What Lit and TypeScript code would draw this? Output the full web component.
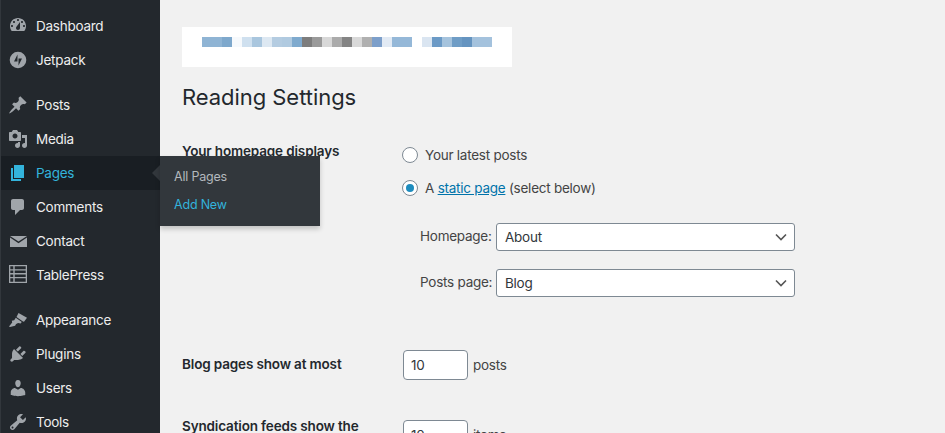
import { LitElement, html, css, svg } from "lit";
import { customElement } from "lit/decorators.js";

const ICONS: Record<string, unknown> = {
  dashboard: svg`<path fill-rule="evenodd" transform="translate(0 -1)" d="M3.760 16h12.480c1.100-1.370 1.760-3.110 1.760-5 0-4.420-3.580-8-8-8s-8 3.580-8 8c0 1.890.66 3.630 1.760 5zM10 4c.55 0 1 .45 1 1s-.45 1-1 1-1-.45-1-1 .45-1 1-1zM6 6c.55 0 1 .45 1 1s-.45 1-1 1-1-.45-1-1 .45-1 1-1zm8 0c.55 0 1 .45 1 1s-.45 1-1 1-1-.45-1-1 .45-1 1-1zm-5.370 5.550L12 7v6c0 1.100-.9 2-2 2s-2-.9-2-2c0-.57.24-1.080.63-1.450zM4 10c.55 0 1 .45 1 1s-.45 1-1 1-1-.45-1-1 .45-1 1-1zm12 0c.55 0 1 .45 1 1s-.45 1-1 1-1-.45-1-1 .45-1 1-1z"/>`,
  jetpack: svg`<path fill-rule="evenodd" d="M10 1.700a8.300 8.300 0 1 0 0 16.600 8.300 8.300 0 0 0 0-16.600zM9.500 4.500v7H6zM10.500 15.500v-7H14z"/>`,
  posts: svg`<path d="M10.440 3.020l1.820-1.820 6.360 6.350-1.830 1.820c-1.050-.68-2.480-.57-3.410.36l-.75.75c-.92.93-1.040 2.350-.35 3.410l-1.830 1.820-2.410-2.410-2.800 2.790c-.42.420-3.380 2.710-3.800 2.290s1.860-3.390 2.280-3.810l2.790-2.790L4.100 9.360l1.830-1.820c1.050.69 2.480.57 3.400-.36l.75-.75c.93-.92 1.050-2.350.36-3.410z"/>`,
  media: svg`<path d="M13 11V4c0-.55-.45-1-1-1h-1.670L9 1H5L3.670 3H2c-.55 0-1 .45-1 1v7c0 .55.45 1 1 1h10c.55 0 1-.45 1-1zM7 4.500c1.380 0 2.500 1.120 2.500 2.500S8.380 9.500 7 9.500 4.500 8.380 4.500 7 5.620 4.500 7 4.500zM14 6h5v10.500c0 1.380-1.120 2.500-2.500 2.500S14 17.880 14 16.500s1.120-2.500 2.500-2.500c.17 0 .34.020.5.050V9h-3V6zm-4 8.050V13h2v3.500c0 1.380-1.120 2.500-2.500 2.500S7 17.880 7 16.500 8.120 14 9.500 14c.17 0 .34.020.5.050z"/>`,
  pages: svg`<path d="M6 15V2h10v13H6zm-1 1h8v2H3V5h2v11z"/>`,
  comments: svg`<path d="M5 2h9c1.100 0 2 .9 2 2v7c0 1.100-.9 2-2 2h-2l-5 5v-5H5c-1.100 0-2-.9-2-2V4c0-1.100.9-2 2-2z"/>`,
  contact: svg`<path d="M2 5h17l-8.500 5.600z"/><path d="M2 6.600l8.500 5.600L19 6.600V16H2z"/>`,
  table: svg`<path fill-rule="evenodd" d="M1 0h18v18H1zM2.300 1.300v3h3v-3zm4.400 0v3h11v-3zM2.300 5.600v2.500h3V5.600zm4.400 0v2.500h11V5.600zM2.300 9.400v2.500h3V9.400zm4.400 0v2.500h11V9.400zM2.300 13.200v3.500h3v-3.500zm4.400 0v3.500h11v-3.500z"/>`,
  appearance: svg`<path d="M10.500 3L19 7.800l-3 4-1-.3L8.500 7z"/><path d="M7.800 7.800l6 4.200-1.200 1.500-2.500-.6-2 1-1 1.800L2 17l-1-.6 3.200-4-.4-1.600 2.400-.6z"/>`,
  plugins: svg`<path d="M13.110 4.360L9.870 7.600 8 5.730l3.240-3.240c.350-.34 1.050-.2 1.560.32.520.510.660 1.210.31 1.550zm-8 1.770l.91-1.120 9.010 9.010-1.190.84c-.71.710-2.630 1.160-3.820 1.160H6.140L4.900 17.260c-.59.590-1.540.59-2.120 0-.59-.58-.59-1.530 0-2.120l1.240-1.240v-3.880c0-1.130.4-3.050 1.110-3.760zm7.260 3.970l3.240-3.240c.340-.35 1.040-.21 1.550.31.520.51.660 1.210.31 1.550l-3.240 3.250z"/>`,
  users: svg`<path d="M10 9.250c-2.270 0-2.730-3.440-2.730-3.440C7 4.020 7.820 2 9.970 2c2.160 0 2.980 2.020 2.710 3.810 0 0-.41 3.440-2.680 3.440zm0 2.570L12.720 10c2.390 0 4.520 2.330 4.520 4.530v2.490s-3.650 1.130-7.240 1.130c-3.650 0-7.240-1.130-7.240-1.130v-2.490c0-2.250 1.940-4.480 4.150-4.480z"/>`,
  tools: svg`<path fill-rule="evenodd" d="M16.680 9.770c-1.340 1.340-3.300 1.670-4.950.99l-5.410 6.520c-.99.990-2.590.990-3.580 0s-.99-2.590 0-3.570l6.520-5.420c-.68-1.650-.35-3.610.99-4.950 1.280-1.280 3.120-1.620 4.720-1.060l-2.890 2.890 2.820 2.820 2.860-2.860c.53 1.580.18 3.400-1.080 4.640zM3.810 16.210c.4.390 1.040.39 1.430 0 .4-.4.400-1.040 0-1.430-.39-.4-1.030-.4-1.430 0-.39.390-.39 1.030 0 1.430z"/>`,
};

const GROUPS: { key: string; label: string; active?: boolean }[][] = [
  [
    { key: "dashboard", label: "Dashboard" },
    { key: "jetpack", label: "Jetpack" },
  ],
  [
    { key: "posts", label: "Posts" },
    { key: "media", label: "Media" },
    { key: "pages", label: "Pages", active: true },
    { key: "comments", label: "Comments" },
    { key: "contact", label: "Contact" },
    { key: "table", label: "TablePress" },
  ],
  [
    { key: "appearance", label: "Appearance" },
    { key: "plugins", label: "Plugins" },
    { key: "users", label: "Users" },
    { key: "tools", label: "Tools" },
  ],
];

const STRIP = [
  "#8fb4d4", "#8fb4d4", "#7ea8cc", "#f6f9fc", "#cfe0ef", "#a9c6de", "#dde8f2", "#b4cce1",
  "#b0cae0", "#7faace", "#7d7d7d", "#9a9a9a", "#d8d8d8", "#ababab", "#848484", "#d9d9d9",
  "#b0b0b0", "#7d9fca", "#e2eaf4", "#95b8d8", "#95b8d8", "#ffffff", "#dae5f1", "#6b9ac6",
  "#a5c3dd", "#6f9dc6", "#6594c0", "#a4c2dd", "#a4c2dd",
];

@customElement("app-root")
export class AppRoot extends LitElement {
  static styles = css`
    :host {
      display: flex;
      width: 945px;
      height: 433px;
      overflow: hidden;
      background: #f1f1f1;
      color: #23282d;
      font-family: Inter, "Liberation Sans", sans-serif;
      font-size: 13.5px;
      letter-spacing: -0.25px;
    }
    .side {
      position: relative;
      width: 160px;
      flex: none;
      background: #23282d;
      border-left: 1px solid #32373c;
      box-sizing: border-box;
      padding-top: 9px;
      display: flex;
      flex-direction: column;
      gap: 11px;
    }
    .item {
      position: relative;
      height: 34px;
      display: flex;
      align-items: center;
      gap: 8px;
      padding-left: 7px;
      color: #eee;
    }
    .item svg {
      width: 20px;
      height: 20px;
      fill: #a0a5aa;
      flex: none;
    }
    .item.active {
      background: #191e23;
      color: #33b3db;
    }
    .item.active svg {
      fill: #33b3db;
    }
    .item.active::after {
      content: "";
      position: absolute;
      right: 0;
      top: 9px;
      border: 8px solid transparent;
      border-left: 0;
      border-right-color: #32373c;
    }
    .fly {
      position: absolute;
      left: 159px;
      top: 156px;
      width: 160px;
      height: 70px;
      box-sizing: border-box;
      padding: 7px 14px;
      background: #32373c;
      box-shadow: 0 3px 5px rgba(0, 0, 0, 0.2);
      font-size: 12.5px;
      letter-spacing: -0.2px;
      z-index: 2;
      display: flex;
      flex-direction: column;
    }
    .fly div {
      height: 28px;
      line-height: 28px;
      color: #b4b9be;
    }
    .fly div.on {
      color: #33b3db;
    }
    .main {
      flex: 1;
      padding: 27px 0 0 22px;
      min-width: 0;
    }
    .banner {
      width: 330px;
      height: 40px;
      box-sizing: border-box;
      background: #fff;
      padding: 10px 20px;
      display: flex;
    }
    .banner i {
      width: 10px;
      height: 10px;
      flex: none;
    }
    h1 {
      margin: 16px 0 0;
      font-size: 22px;
      font-weight: 400;
      line-height: 29px;
      letter-spacing: -0.05px;
      color: #23282d;
    }
    .row {
      display: grid;
      grid-template-columns: 220px 1fr;
    }
    .first {
      margin-top: 29px;
    }
    .lab {
      font-weight: 600;
      color: #23282d;
      line-height: 20px;
      letter-spacing: -0.15px;
    }
    .radios {
      display: flex;
      flex-direction: column;
      gap: 13px;
      margin-top: 4px;
      color: #444;
    }
    .radio {
      display: flex;
      align-items: center;
      gap: 7px;
      height: 20px;
    }
    .dot {
      width: 16px;
      height: 16px;
      box-sizing: border-box;
      border: 1px solid #7e8993;
      border-radius: 50%;
      background: #fff;
      display: grid;
      place-items: center;
      flex: none;
    }
    .dot b {
      width: 8px;
      height: 8px;
      border-radius: 50%;
      background: #1e8cbe;
    }
    a {
      color: #0073aa;
      text-decoration: underline;
    }
    .selects {
      display: flex;
      flex-direction: column;
      gap: 18px;
      margin: 25px 0 0 18px;
    }
    .sel-row {
      display: flex;
      align-items: center;
      gap: 4px;
      color: #444;
    }
    .sel-row span {
      width: 72px;
      white-space: nowrap;
      position: relative;
      bottom: 1px;
    }
    .select {
      width: 299px;
      height: 28px;
      box-sizing: border-box;
      border: 1px solid #7e8993;
      border-radius: 3px;
      background: #fff;
      display: flex;
      align-items: center;
      justify-content: space-between;
      padding: 0 6px 0 8px;
      color: #32373c;
    }
    .select svg {
      width: 14px;
      height: 14px;
      fill: none;
      stroke: #555;
      stroke-width: 1.6;
    }
    .num-row {
      display: flex;
      align-items: center;
      gap: 5px;
      color: #444;
      margin-left: 1px;
    }
    .num {
      width: 65px;
      height: 30px;
      box-sizing: border-box;
      border: 1px solid #7e8993;
      border-radius: 4px;
      background: #fff;
      padding-left: 7px;
      line-height: 28px;
      color: #32373c;
    }
    .blog {
      margin-top: 53px;
    }
    .blog .lab {
      padding-top: 4px;
    }
    .feeds {
      margin-top: 40px;
    }
    .feeds .lab {
      margin-top: -4px;
    }
  `;

  render() {
    return html`
      <nav class="side">
        ${GROUPS.map(
          (g) => html`<div>
            ${g.map(
              (it) => html`<div class="item ${it.active ? "active" : ""}">
                <svg viewBox="0 0 20 20">${ICONS[it.key]}</svg>
                <span>${it.label}</span>
              </div>`
            )}
          </div>`
        )}
        <div class="fly">
          <div>All Pages</div>
          <div class="on">Add New</div>
        </div>
      </nav>
      <main class="main">
        <div class="banner">
          ${STRIP.map((c) => html`<i style="background:${c}"></i>`)}
        </div>
        <h1>Reading Settings</h1>
        <section class="row first">
          <div class="lab">Your homepage displays</div>
          <div>
            <div class="radios">
              <div class="radio"><span class="dot"></span><span>Your latest posts</span></div>
              <div class="radio">
                <span class="dot"><b></b></span>
                <span>A <a>static page</a> (select below)</span>
              </div>
            </div>
            <div class="selects">
              <div class="sel-row">
                <span>Homepage:</span>
                <div class="select">
                  About
                  <svg viewBox="0 0 14 14"><path d="M2 4.500l5 5 5-5" /></svg>
                </div>
              </div>
              <div class="sel-row">
                <span>Posts page:</span>
                <div class="select">
                  Blog
                  <svg viewBox="0 0 14 14"><path d="M2 4.500l5 5 5-5" /></svg>
                </div>
              </div>
            </div>
          </div>
        </section>
        <section class="row blog">
          <div class="lab">Blog pages show at most</div>
          <div class="num-row"><div class="num">10</div><span>posts</span></div>
        </section>
        <section class="row feeds">
          <div class="lab">Syndication feeds show the</div>
          <div class="num-row"><div class="num">10</div><span>items</span></div>
        </section>
      </main>
    `;
  }
}
